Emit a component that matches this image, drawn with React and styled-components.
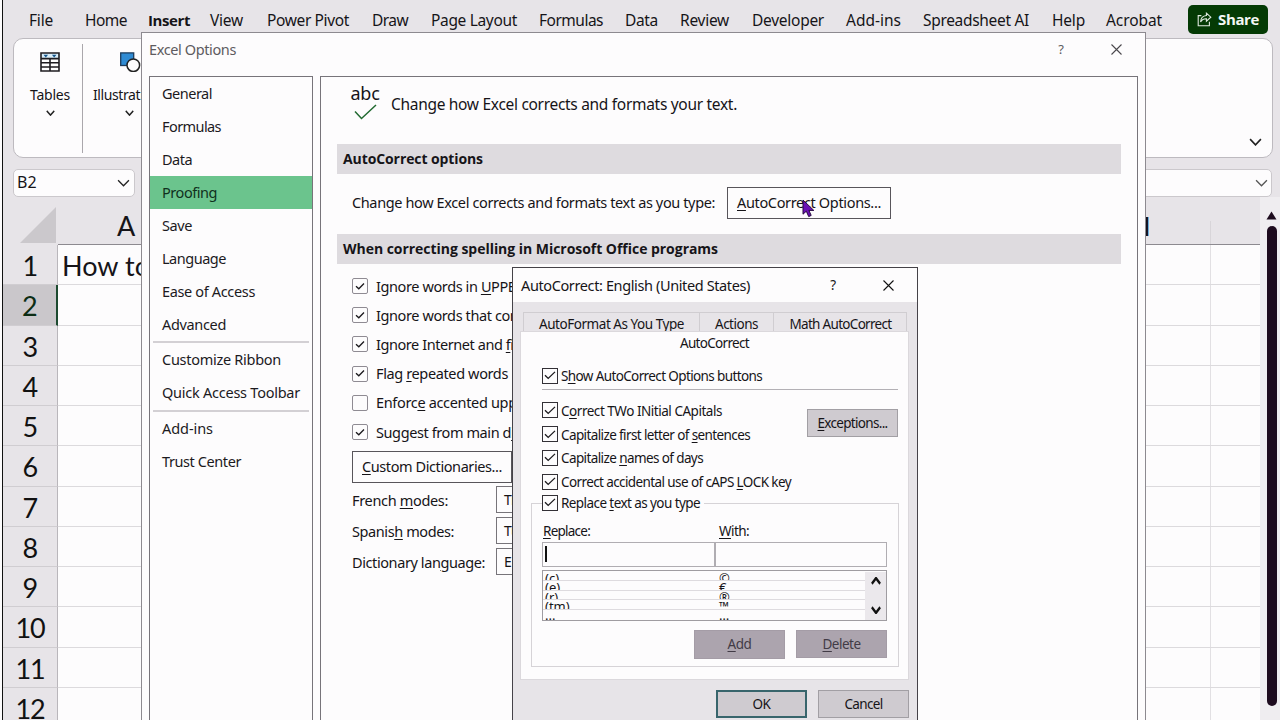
import React, { useLayoutEffect, useRef, useState } from "react";
import styled, { createGlobalStyle, css } from "styled-components";

const GlobalStyle = createGlobalStyle`
  * {
    box-sizing: border-box;
  }

  body {
    margin: 0;
    overflow: hidden;
    font-family: "Noto Sans", "Open Sans", sans-serif;
    color: #161418;
  }

  u {
    text-decoration-thickness: 1px;
    text-underline-offset: 2px;
  }
`;

const Screen = styled.div`
  position: relative;
  width: 1280px;
  height: 720px;
  overflow: hidden;
  background: #fdfcfd;
  padding-left: 2px;
`;

/* ---------- text ---------- */

const TextSpan = styled.span`
  display: inline-block;
  flex: none;
  white-space: pre;
  line-height: 1.36;
  font-size: ${({ $size }) => $size || 15.5}px;
  font-weight: 400;

  ${({ $bold }) =>
    $bold &&
    css`
      font-family: "Open Sans", "Noto Sans", sans-serif;
      font-weight: 700;
    `}
`;

// "&" in front of a letter marks it as the access key
const withAccessKey = (text) => {
  const at = text.indexOf("&");
  if (at < 0) return text;
  return (
    <>
      {text.slice(0, at)}
      <u>{text[at + 1]}</u>
      {text.slice(at + 2)}
    </>
  );
};

// Tracks the label in or out so that it fills the given width
const Text = ({ children, width, size, bold }) => {
  const ref = useRef(null);
  const [spacing, setSpacing] = useState(0);

  useLayoutEffect(() => {
    if (!width) return;
    const count = children.replace("&", "").length;
    const natural = ref.current.getBoundingClientRect().width;
    setSpacing((current) => current + (width - natural) / count);
  }, [children, width]);

  return (
    <TextSpan
      ref={ref}
      $size={size}
      $bold={bold}
      style={{ letterSpacing: `${spacing}px` }}
    >
      {withAccessKey(children)}
    </TextSpan>
  );
};

/* ---------- small drawings ---------- */

const Chevron = ({ w = 12, h = 7, stroke = 1.5, color = "#222", up }) => (
  <svg width={w} height={h} viewBox="0 0 12 7" preserveAspectRatio="none">
    <path
      d={up ? "M1 6 6 1l5 5" : "M1 1l5 5 5-5"}
      fill="none"
      stroke={color}
      strokeWidth={stroke}
    />
  </svg>
);

const CloseIcon = ({ color = "#333" }) => (
  <svg width="11" height="11" viewBox="0 0 11 11">
    <path d="M.5.5l10 10M10.5.5l-10 10" stroke={color} strokeWidth="1.1" />
  </svg>
);

const TablesIcon = () => (
  <svg width="20" height="20" viewBox="0 0 20 20">
    <rect x="1" y="1" width="18" height="18" fill="#fff" />
    <rect x="1" y="1" width="18" height="5" fill="#d9eefa" />
    <path d="M3.5 2.8h4.6L5.8 5.4zM11.9 2.8h4.6l-2.3 2.6z" fill="#15568c" />
    <path
      d="M1 1h18v18H1zM1 6.6h18M1 10.8h18M1 15h18M10 6.6V19"
      fill="none"
      stroke="#1f1d21"
      strokeWidth="1.6"
    />
  </svg>
);

const ShapesIcon = () => (
  <svg width="22" height="20" viewBox="0 0 22 20">
    <rect x="1.7" y=".9" width="13" height="12.6" fill="#2f8bd3" stroke="#1d3c5c" strokeWidth="1.3" />
    <circle cx="14.3" cy="13.2" r="6.3" fill="#fdfcfd" stroke="#222" strokeWidth="1.5" />
  </svg>
);

const ShareIcon = () => (
  <svg width="15" height="15" viewBox="0 0 15 15" fill="none" stroke="#dfe9df" strokeWidth="1.1">
    <path d="M4.4 3.6H1.2v10.2h11.2v-4" />
    <path d="M9.4 1.2l4.4 4-4.4 4V6.8C6.6 6.7 4.9 7.7 3.6 10c.2-4 2.2-6.2 5.8-6.5z" />
  </svg>
);

const Cursor = () => (
  <svg width="13" height="19" viewBox="0 0 13 19">
    <path
      d="M1 1v14.2l3.3-3 2.4 5.4 2.5-1.2-2.3-5h4.9z"
      fill="#6a0fb5"
      stroke="#25083f"
      strokeWidth="1"
    />
  </svg>
);

/* ---------- workbook behind the dialogs ---------- */

const Workbook = styled.div`
  display: flex;
  flex-direction: column;
  height: 720px;
  border-left: 1.5px solid #111;
  background: #e7e4e8;
`;

const TabBar = styled.div`
  display: flex;
  align-items: center;
  height: 38px;
  padding: 0 12px 0 26px;
`;

const Tab = styled.div`
  display: flex;
  flex: none;
  align-items: center;
  width: ${({ $w }) => $w}px;
  height: 26px;
  margin-top: 3px;
`;

const ActiveTab = styled.div`
  height: 26px;
  margin-top: 1px;
  padding-top: 1px;
  border-bottom: 2px solid #1c3a2a;
`;

const ShareButton = styled.button`
  display: flex;
  align-items: center;
  gap: 6px;
  width: 81px;
  height: 29px;
  padding: 1px 0 0 9px;
  border: 0;
  border-radius: 5px;
  background: #043a04;
  color: #f4f7f4;
  font-family: inherit;
`;

const Ribbon = styled.div`
  display: flex;
  flex: none;
  width: 1260px;
  height: 120px;
  margin-left: 10px;
  padding-top: 5px;
  border: 1px solid #bdbabf;
  border-radius: 10px;
  background: #fdfcfd;
`;

const RibbonGroup = styled.div`
  display: flex;
  flex-direction: column;
  align-items: center;
  width: ${({ $w }) => $w}px;
  height: 109px;
  padding: 8px 0 0 ${({ $last }) => ($last ? 0 : 4)}px;
  border-right: ${({ $last }) => ($last ? "none" : "1px solid #aaa7ac")};

  span {
    margin: 13px 0 6px;
  }
`;

const RibbonToggle = styled.div`
  display: flex;
  align-items: flex-end;
  margin: 0 10px 11px auto;
`;

const FormulaRow = styled.div`
  display: flex;
  flex: none;
  gap: 10px;
  height: 39px;
  padding: 11px 8px 0 10px;
`;

const FormulaBox = styled.div`
  display: flex;
  align-items: center;
  justify-content: space-between;
  flex: ${({ $w }) => ($w ? `0 0 ${$w}px` : 1)};
  height: 28px;
  padding: 0 ${({ $w }) => ($w ? 4 : 3)}px 1px 3px;
  border: 1px solid #cbc8cc;
  border-radius: 5px;
  background: #fdfcfd;
`;

const SheetArea = styled.div`
  display: flex;
  flex: 1;
  min-height: 0;
  font-family: Lato, "Noto Sans", sans-serif;
`;

const RowHeaders = styled.div`
  width: 55px;
  flex: none;
`;

const Corner = styled.div`
  display: flex;
  justify-content: flex-end;
  align-items: flex-end;
  height: 48px;
  padding: 0 2px 2px 0;
`;

const RowHeader = styled.div`
  display: flex;
  align-items: center;
  justify-content: center;
  height: 40.25px;
  padding-top: 3px;
  border-right: ${({ $active }) => ($active ? "2px solid #1d4a30" : "1px solid #b9b6bb")};
  border-bottom: 1px solid #d0cdd1;
  background: ${({ $active }) => ($active ? "#cac7cb" : "#e7e4e8")};
  color: ${({ $active }) => ($active ? "#0c2d14" : "#111")};

  span {
    line-height: 30px;
  }
`;

const Columns = styled.div`
  width: 1202px;
  flex: none;
`;

const ColumnHeads = styled.div`
  display: flex;
  align-items: center;
  justify-content: space-between;
  height: 48px;
  padding: 11px 70px 0 59px;
  border-bottom: 1px solid #8d8a90;
  background: linear-gradient(#d8d5d9, #d8d5d9) 1152px 24px / 1px 24px no-repeat;
`;

const ColumnName = styled.div`
  width: ${({ $w }) => $w}px;
`;

const SheetRow = styled.div`
  display: flex;
  align-items: center;
  height: 40.25px;
  padding: 3px 0 0 4px;
  border-bottom: 1px solid #dcdadd;
  background: linear-gradient(#e2e0e3, #e2e0e3) 1152px 0 / 1px 100% no-repeat #fdfcfd;
`;

const ScrollTrack = styled.div`
  display: flex;
  flex-direction: column;
  align-items: center;
  flex: 1;
  gap: 6px;
  padding: 14px 0 0 3px;
  background: #efedf0;
`;

const ScrollThumb = styled.div`
  width: 10px;
  height: 480px;
  border-radius: 5px;
  background: #1d0b1e;
`;

/* ---------- shared dialog parts ---------- */

const TitleBar = styled.div`
  display: flex;
  align-items: center;
  height: ${({ $h }) => $h}px;
  padding: ${({ $pad }) => $pad};
  background: #fdfcfd;
  color: ${({ $dim }) => ($dim ? "#5d5b60" : "#161418")};
`;

const TitleButtons = styled.div`
  display: flex;
  align-items: center;
  gap: 47px;
  margin: -1px 0 0 auto;
`;

const Button = styled.button`
  display: flex;
  flex: none;
  align-items: center;
  justify-content: center;
  width: ${({ $w }) => $w}px;
  height: ${({ $h }) => $h || 28}px;
  padding: 0;
  font-family: inherit;
  color: #161418;
  border: 1px solid #58555b;
  background: #fdfcfd;

  ${({ $kind }) =>
    $kind === "grey" &&
    css`
      border-color: #a29fa4;
      background: #cfcbd0;
    `}

  ${({ $kind }) =>
    $kind === "default" &&
    css`
      border: 2px solid #38656c;
      background: #cfcbd0;
    `}

  ${({ $kind }) =>
    $kind === "disabled" &&
    css`
      border-color: #a49ca6;
      background: #aca4ae;
      color: #423b46;
    `}
`;

const CheckRow = styled.div`
  display: flex;
  align-items: center;
  gap: ${({ $gap }) => $gap}px;
  height: ${({ $h }) => $h}px;
`;

const CheckBox = styled.div`
  display: flex;
  flex: none;
  align-items: center;
  justify-content: center;
  width: 16px;
  height: 16px;
  border: ${({ $classic }) => ($classic ? "1px solid #333036" : "1.5px solid #8f8b93")};
  border-radius: ${({ $classic }) => ($classic ? 0 : 2)}px;
  background: #fdfcfd;
  margin-bottom: 1px;
`;

const Check = ({ label, width, size, checked = true, classic, height, gap }) => (
  <CheckRow $h={height} $gap={gap}>
    <CheckBox $classic={classic}>
      {checked && (
        <svg width="12" height="9" viewBox="0 0 12 9">
          <path
            d={classic ? "M1 4.2l3.2 3.2L11 .9" : "M2 4.2l2.8 2.6L10 1.5"}
            fill="none"
            stroke="#1b191d"
            strokeWidth="1.3"
          />
        </svg>
      )}
    </CheckBox>
    <Text width={width} size={size}>
      {label}
    </Text>
  </CheckRow>
);

/* ---------- Excel Options ---------- */

const OptionsWindow = styled.div`
  position: absolute;
  left: 141px;
  top: 32px;
  width: 1005px;
  height: 700px;
  border: 1px solid #8d8a90;
  background: #fdfcfd;
`;

const OptionsBody = styled.div`
  display: flex;
  gap: 7px;
  padding-left: 7px;
  height: 656px;
`;

const Nav = styled.div`
  width: 164px;
  flex: none;
  border: 1px solid #77747a;
`;

const NavItem = styled.div`
  display: flex;
  align-items: center;
  height: 33px;
  padding-left: 12px;
  background: ${({ $active }) => ($active ? "#6bc48d" : "none")};
  color: ${({ $active }) => ($active ? "#10301d" : "#1c1a1e")};
`;

const NavRule = styled.div`
  height: 2px;
  margin: 0 3px 0.6px;
  background: #d3d0d4;
`;

const Page = styled.div`
  width: 818px;
  flex: none;
  padding: 0 16px;
  border: 1px solid #77747a;
`;

const PageIntro = styled.div`
  display: flex;
  align-items: center;
  gap: 11px;
  height: 67px;
  padding: 0 0 12px 13px;
`;

const AbcIcon = styled.div`
  display: flex;
  flex-direction: column;
  align-items: center;
  width: 30px;
  height: 48px;

  span {
    line-height: 24px;
  }

  svg {
    margin-top: -1px;
  }
`;

const SectionHead = styled.div`
  display: flex;
  align-items: center;
  height: 30px;
  padding: 0 0 1px 6px;
  background: #dedbdf;
`;

const SettingRow = styled.div`
  display: flex;
  align-items: center;
  gap: 12px;
  height: 60px;
  padding: 0 0 3px 15px;
`;

const Spelling = styled.div`
  display: flex;
  flex-direction: column;
  padding: 8px 0 0 15px;
`;

const DictionaryButtonRow = styled.div`
  padding: 4px 0 1px;
`;

const ModeRow = styled.div`
  display: flex;
  align-items: center;
  height: 31px;
`;

const ModeLabel = styled.div`
  width: 144px;
`;

const Select = styled.div`
  display: flex;
  align-items: center;
  width: 190px;
  height: 27px;
  padding-left: 7px;
  border: 1px solid #77747a;
`;

/* ---------- AutoCorrect ---------- */

const AutoCorrectWindow = styled.div`
  position: absolute;
  left: 512px;
  top: 267px;
  width: 406px;
  height: 470px;
  border: 1.5px solid #454248;
  background: #e7e4e8;
`;

const BackTabs = styled.div`
  display: flex;
  height: 19px;
  margin: 10px 10px 0;
  border: 1px solid #d0cdd1;
  border-bottom: 0;
  overflow: hidden;
`;

const BackTab = styled.div`
  display: flex;
  align-items: flex-start;
  justify-content: center;
  flex: 0 0 ${({ $w }) => $w}px;
  padding-top: 2px;

  & + & {
    border-left: 1px solid #d0cdd1;
  }
`;

const Sheet = styled.div`
  width: 389px;
  height: 349px;
  margin-left: 7px;
  padding: 2px 10px 0;
  border: 1px solid #dbd8dc;
  background: #fdfcfd;
`;

const SheetTitle = styled.div`
  display: flex;
  justify-content: center;
  height: 33px;
`;

const Inset = styled.div`
  padding-left: 11px;
`;

const Rule = styled.div`
  height: 1px;
  margin: 4px 0 9px 11px;
  background: #b3b0b5;
`;

const CapsArea = styled.div`
  display: flex;
  justify-content: space-between;
  padding: 0 0 0 11px;

  button {
    margin-top: 10px;
  }
`;

const ReplaceGroup = styled.fieldset`
  width: 368px;
  height: 174px;
  margin: -1px 0 0;
  padding: 0 10px;
  border: 1px solid #d6d3d7;

  legend {
    padding: 0 4px 0 0;
    height: 20px;
  }
`;

const FieldLabels = styled.div`
  display: flex;
  gap: 129px;
  padding: 9px 0 0 1px;
`;

const Fields = styled.div`
  display: flex;
  width: 345px;
  margin-top: 1px;
`;

const Field = styled.div`
  flex: 1;
  height: 25px;
  padding: 3px 2px;
  border: 1px solid #b0adb2;
`;

const Caret = styled.div`
  width: 2px;
  height: 16px;
  background: #111;
`;

const ReplaceList = styled.div`
  display: flex;
  width: 345px;
  height: 51px;
  margin-top: 3px;
  padding-top: 1px;
  border: 1px solid #9f9ca1;
`;

const ListRows = styled.div`
  flex: 1;
`;

const ListRow = styled.div`
  display: flex;
  height: 9.6px;
  overflow: hidden;
  border-bottom: 1px solid #dedbdf;

  &:last-child {
    border-bottom: 0;
  }

  span {
    line-height: ${({ $lh }) => $lh}px;
  }
`;

const ListCell = styled.div`
  display: flex;
  align-items: flex-start;
  width: ${({ $w }) => $w}px;
  padding-left: 2px;
`;

const ListScroll = styled.div`
  display: flex;
  flex-direction: column;
  align-items: center;
  justify-content: space-between;
  width: 21px;
  padding: 5px 0 6px;
  background: #ebe8ec;
`;

const Actions = styled.div`
  display: flex;
  align-items: center;
  justify-content: flex-end;
  gap: 11px;
  width: 345px;
  padding-top: 9px;
`;

const Footer = styled.div`
  display: flex;
  justify-content: flex-end;
  gap: 11px;
  padding: 10px 8px 0;
`;

const CursorSpot = styled.div`
  position: absolute;
  left: 802px;
  top: 199px;
`;

// label, text width, distance to the next tab
const tabs = [
  ["File", 24, 56],
  ["Home", 42, 63],
  ["Insert", 42, 62],
  ["View", 33, 57],
  ["Power Pivot", 82, 105],
  ["Draw", 36, 59],
  ["Page Layout", 86, 108],
  ["Formulas", 64, 86],
  ["Data", 33, 55],
  ["Review", 49, 72],
  ["Developer", 72, 94],
  ["Add-ins", 55, 77],
  ["Spreadsheet AI", 106, 129],
  ["Help", 33, 54],
  ["Acrobat", 56, 82],
];

const navGroups = [
  [
    ["General", 50],
    ["Formulas", 59],
    ["Data", 30],
    ["Proofing", 55],
    ["Save", 30],
    ["Language", 64],
    ["Ease of Access", 93],
    ["Advanced", 64],
  ],
  [
    ["Customize Ribbon", 119],
    ["Quick Access Toolbar", 138],
  ],
  [
    ["Add-ins", 51],
    ["Trust Center", 79],
  ],
];

const spellingOptions = [
  { label: "Ignore words in &UPPERCASE", width: 181 },
  { label: "Ignore words that contain num&bers", width: 229 },
  { label: "Ignore Internet and &file addresses", width: 217 },
  { label: "Flag &repeated words", width: 132 },
  { label: "Enforc&e accented uppercase in French", width: 246, checked: false },
  { label: "Suggest from main d&ictionary only", width: 221 },
];

const modes = [
  ["French &modes:", 96, "Traditional and new spellings"],
  ["Spanis&h modes:", 102, "Tuteo verb forms only"],
  ["Dictionary lan&guage:", 133, "English (United States)"],
];

const capsOptions = [
  ["C&orrect TWo INitial CApitals", 161],
  ["Capitalize first letter of &sentences", 189],
  ["Capitalize &names of days", 142],
  ["Correct accidental use of cAPS &LOCK key", 230],
];

const replacements = [
  ["(c)", "©"],
  ["(e)", "€"],
  ["(r)", "®"],
  ["(tm)", "™"],
  ["...", "…"],
];

const ExcelWorkbook = () => (
  <Workbook>
    <TabBar>
      {tabs.map(([label, width, step]) => (
        <Tab key={label} $w={step}>
          {label === "Insert" ? (
            <ActiveTab>
              <Text width={width} size={15} bold>
                {label}
              </Text>
            </ActiveTab>
          ) : (
            <Text width={width}>{label}</Text>
          )}
        </Tab>
      ))}
      <ShareButton>
        <ShareIcon />
        <Text width={41} size={15} bold>
          Share
        </Text>
      </ShareButton>
    </TabBar>

    <Ribbon>
      <RibbonGroup $w={69}>
        <TablesIcon />
        <Text width={40} size={14}>
          Tables
        </Text>
        <Chevron w={9} h={6} stroke={1.8} />
      </RibbonGroup>
      <RibbonGroup $w={93} $last>
        <ShapesIcon />
        <Text width={73} size={14}>
          Illustrations
        </Text>
        <Chevron w={9} h={6} stroke={1.8} />
      </RibbonGroup>
      <RibbonToggle>
        <Chevron w={13} h={8} />
      </RibbonToggle>
    </Ribbon>

    <FormulaRow>
      <FormulaBox $w={122}>
        <Text width={20} size={16}>
          B2
        </Text>
        <Chevron w={13} h={8} stroke={1.2} />
      </FormulaBox>
      <FormulaBox>
        <span />
        <Chevron w={13} h={8} stroke={1.2} color="#555" />
      </FormulaBox>
    </FormulaRow>

    <SheetArea>
      <RowHeaders>
        <Corner>
          <svg width="36" height="36" viewBox="0 0 36 36">
            <path d="M36 0v36H0z" fill="#cbc8cc" />
          </svg>
        </Corner>
        {Array.from({ length: 12 }, (_, i) => (
          <RowHeader key={i} $active={i === 1}>
            <Text size={27} width={i > 8 ? 29 : 15}>
              {String(i + 1)}
            </Text>
          </RowHeader>
        ))}
      </RowHeaders>
      <Columns>
        <ColumnHeads>
          <ColumnName>
            <Text size={27}>A</Text>
          </ColumnName>
          <ColumnName $w={60}>
            <Text size={27} bold>
              H
            </Text>
          </ColumnName>
        </ColumnHeads>
        {Array.from({ length: 12 }, (_, i) => (
          <SheetRow key={i}>
            {i === 0 && (
              <Text size={27} width={88}>
                How to
              </Text>
            )}
          </SheetRow>
        ))}
      </Columns>
      <ScrollTrack>
        <svg width="11" height="9" viewBox="0 0 11 9">
          <path d="M5.5.5 10.5 8.5H.5z" fill="#1d0b1e" />
        </svg>
        <ScrollThumb />
      </ScrollTrack>
    </SheetArea>
  </Workbook>
);

const ExcelOptions = () => (
  <OptionsWindow>
    <TitleBar $h={43} $pad="0 23px 9px 7px" $dim>
      <Text width={87} size={14.5}>
        Excel Options
      </Text>
      <TitleButtons>
        <Text size={13}>?</Text>
        <CloseIcon color="#4a484c" />
      </TitleButtons>
    </TitleBar>
    <OptionsBody>
      <Nav>
        {navGroups.map((group, i) => (
          <React.Fragment key={i}>
            {i > 0 && <NavRule />}
            {group.map(([label, width]) => (
              <NavItem key={label} $active={label === "Proofing"}>
                <Text width={width} size={14.5}>
                  {label}
                </Text>
              </NavItem>
            ))}
          </React.Fragment>
        ))}
      </Nav>

      <Page>
        <PageIntro>
          <AbcIcon>
            <Text width={29} size={18}>
              abc
            </Text>
            <svg width="23" height="16" viewBox="0 0 23 16">
              <path d="M1 7.5l6.5 7L22 1" fill="none" stroke="#226a31" strokeWidth="1.5" />
            </svg>
          </AbcIcon>
          <Text width={346} size={15.5}>
            Change how Excel corrects and formats your text.
          </Text>
        </PageIntro>
        <SectionHead>
          <Text width={140} size={14} bold>
            AutoCorrect options
          </Text>
        </SectionHead>
        <SettingRow>
          <Text width={363} size={14.5}>
            Change how Excel corrects and formats text as you type:
          </Text>
          <Button $w={164} $h={32}>
            <Text width={144} size={14.5}>
              &AutoCorrect Options...
            </Text>
          </Button>
        </SettingRow>
        <SectionHead>
          <Text width={375} size={14} bold>
            When correcting spelling in Microsoft Office programs
          </Text>
        </SectionHead>
        <Spelling>
          {spellingOptions.map((option) => (
            <Check key={option.label} {...option} size={14.5} height={29.2} gap={8} />
          ))}
          <DictionaryButtonRow>
            <Button $w={160} $h={32}>
              <Text width={140} size={14.5}>
                &Custom Dictionaries...
              </Text>
            </Button>
          </DictionaryButtonRow>
          {modes.map(([label, width, value]) => (
            <ModeRow key={label}>
              <ModeLabel>
                <Text width={width} size={14.5}>
                  {label}
                </Text>
              </ModeLabel>
              <Select>
                <Text size={14}>{value}</Text>
              </Select>
            </ModeRow>
          ))}
        </Spelling>
      </Page>
    </OptionsBody>
  </OptionsWindow>
);

const AutoCorrect = () => (
  <AutoCorrectWindow>
    <TitleBar $h={34} $pad="2px 23px 0 8px">
      <Text width={229} size={14.5}>
        AutoCorrect: English (United States)
      </Text>
      <TitleButtons>
        <Text size={13.5}>?</Text>
        <CloseIcon color="#111" />
      </TitleButtons>
    </TitleBar>

    <BackTabs>
      <BackTab $w={175}>
        <Text width={145} size={13.5}>
          AutoFormat As You Type
        </Text>
      </BackTab>
      <BackTab $w={74}>
        <Text width={43} size={13.5}>
          Actions
        </Text>
      </BackTab>
      <BackTab $w={134}>
        <Text width={102} size={13.5}>
          Math AutoCorrect
        </Text>
      </BackTab>
    </BackTabs>

    <Sheet>
      <SheetTitle>
        <Text width={69} size={13.5}>
          AutoCorrect
        </Text>
      </SheetTitle>
      <Inset>
        <Check label="S&how AutoCorrect Options buttons" width={201} size={13.5} height={18} gap={3} classic />
      </Inset>
      <Rule />
      <CapsArea>
        <div>
          {capsOptions.map(([label, width]) => (
            <Check key={label} label={label} width={width} size={13.5} height={23.8} gap={3} classic />
          ))}
        </div>
        <Button $w={91} $kind="grey">
          <Text width={70} size={13.5}>
            &Exceptions...
          </Text>
        </Button>
      </CapsArea>
      <ReplaceGroup>
        <legend>
          <Check label="Replace &text as you type" width={139} size={13.5} height={20} gap={3} classic />
        </legend>
        <FieldLabels>
          <Text width={47} size={13.5}>
            &Replace:
          </Text>
          <Text width={30} size={13.5}>
            &With:
          </Text>
        </FieldLabels>
        <Fields>
          <Field>
            <Caret />
          </Field>
          <Field />
        </Fields>
        <ReplaceList>
          <ListRows>
            {replacements.map(([from, to], i) => (
              <ListRow key={from} $lh={i === 4 ? 10 : 12}>
                <ListCell $w={174}>
                  <Text size={13}>{from}</Text>
                </ListCell>
                <ListCell>
                  <Text size={13}>{to}</Text>
                </ListCell>
              </ListRow>
            ))}
          </ListRows>
          <ListScroll>
            <Chevron w={10} h={8} stroke={2.5} color="#111" up />
            <Chevron w={10} h={8} stroke={2.5} color="#111" />
          </ListScroll>
        </ReplaceList>
        <Actions>
          <Button $w={91} $h={29} $kind="disabled">
            <Text width={24} size={13.5}>
              &Add
            </Text>
          </Button>
          <Button $w={91} $h={28} $kind="disabled">
            <Text width={38} size={13.5}>
              &Delete
            </Text>
          </Button>
        </Actions>
      </ReplaceGroup>
    </Sheet>

    <Footer>
      <Button $w={91} $kind="default">
        <Text width={18} size={13.5}>
          OK
        </Text>
      </Button>
      <Button $w={91} $kind="grey">
        <Text width={38} size={13.5}>
          Cancel
        </Text>
      </Button>
    </Footer>
  </AutoCorrectWindow>
);

const App = () => (
  <>
    <GlobalStyle />
    <Screen>
      <ExcelWorkbook />
      <ExcelOptions />
      <CursorSpot>
        <Cursor />
      </CursorSpot>
      <AutoCorrect />
    </Screen>
  </>
);

export default App;
